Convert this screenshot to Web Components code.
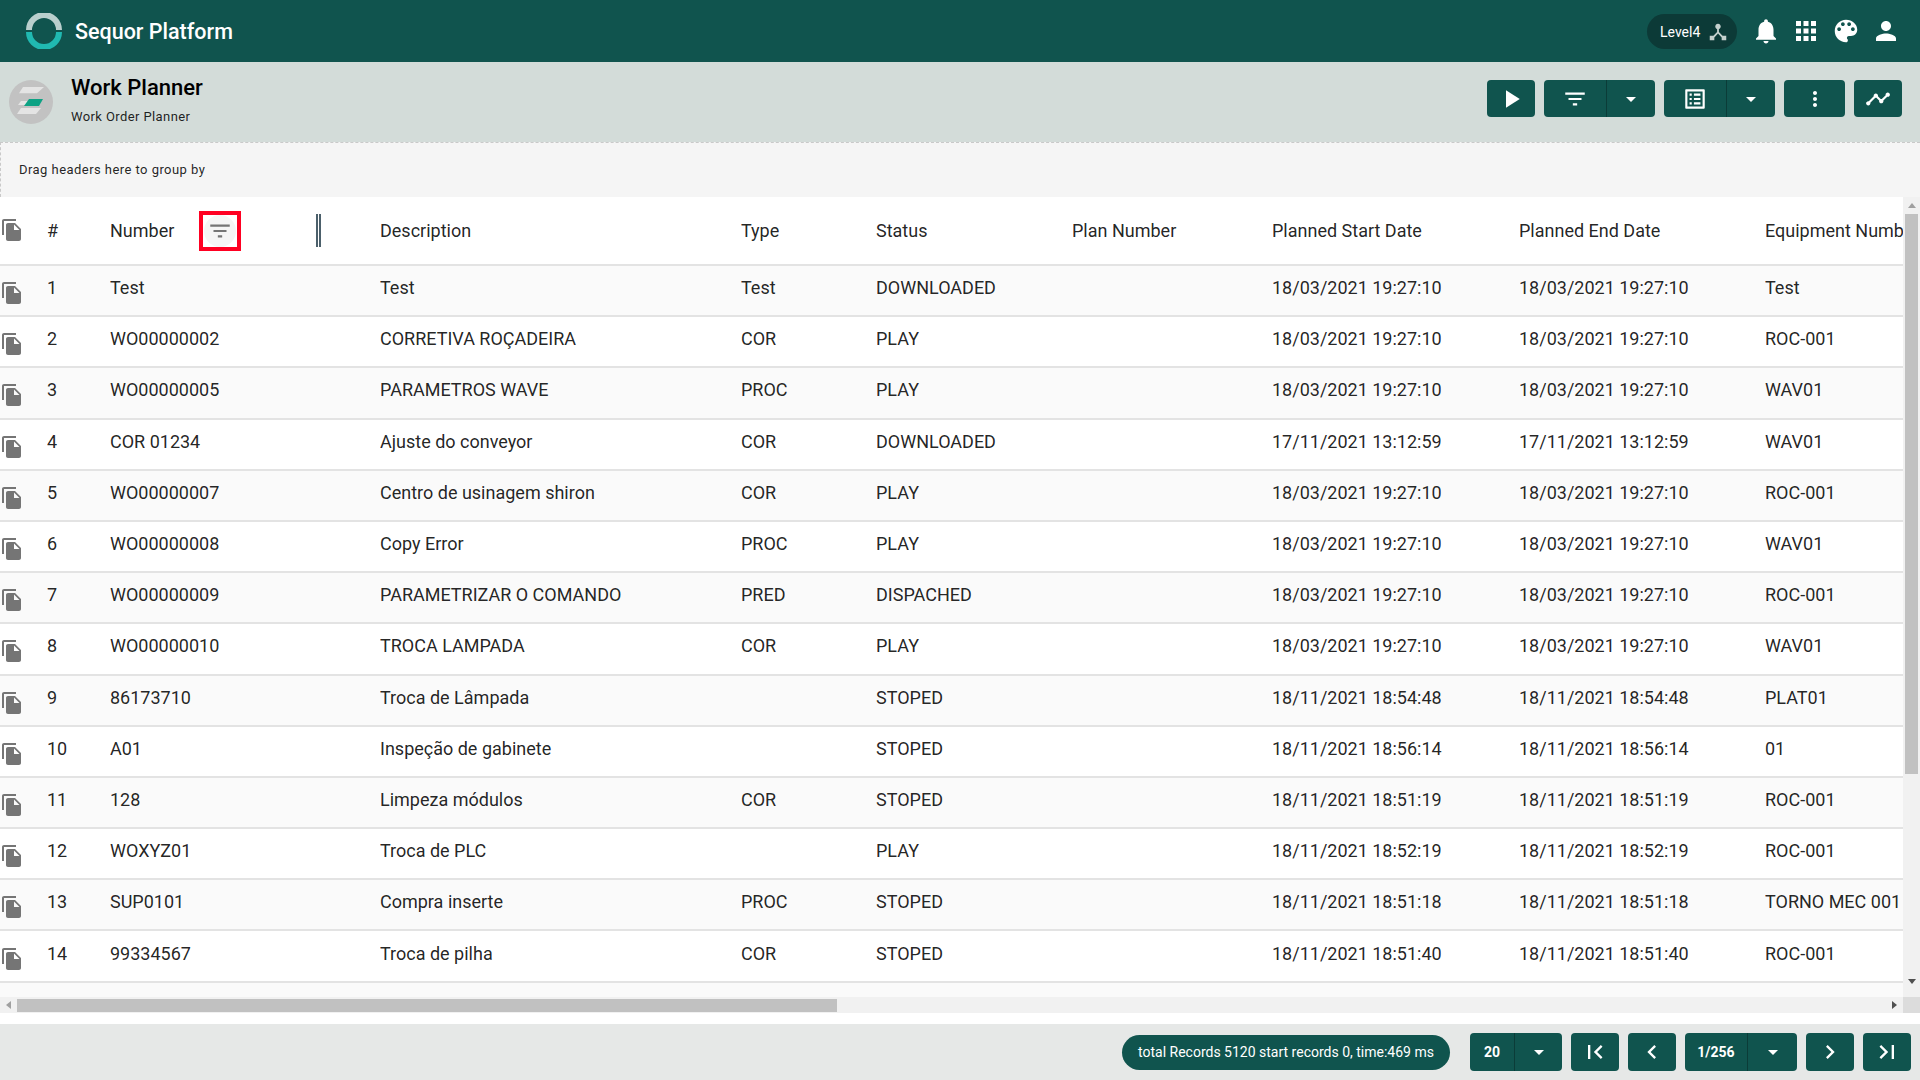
<!DOCTYPE html>
<html lang="en">
<head>
<meta charset="utf-8">
<title>Work Planner</title>
<style>
  html, body { margin: 0; height: 100%; background: #fff; overflow: hidden; }
  body { font-family: Roboto, "Liberation Sans", sans-serif; }
</style>
</head>
<body>
<work-planner-app></work-planner-app>
<script>
const ICONS = {
  bell: 'M12 22c1.1 0 2-.9 2-2h-4c0 1.1.89 2 2 2zm6-6v-5c0-3.07-1.64-5.64-4.5-6.32V4c0-.83-.67-1.5-1.5-1.5s-1.5.67-1.5 1.5v.68C7.63 5.36 6 7.92 6 11v5l-2 2v1h16v-1l-2-2z',
  apps: 'M4 8h4V4H4v4zm6 12h4v-4h-4v4zm-6 0h4v-4H4v4zm0-6h4v-4H4v4zm6 0h4v-4h-4v4zm6-10v4h4V4h-4zm-6 4h4V4h-4v4zm6 6h4v-4h-4v4zm0 6h4v-4h-4v4z',
  palette: 'M12 3c-4.97 0-9 4.03-9 9s4.03 9 9 9c.83 0 1.5-.67 1.5-1.5 0-.39-.15-.74-.39-1.01-.23-.26-.38-.61-.38-.99 0-.83.67-1.5 1.5-1.5H16c2.76 0 5-2.24 5-5 0-4.42-4.03-8-9-8zm-5.5 9c-.83 0-1.5-.67-1.5-1.5S5.67 9 6.5 9 8 9.67 8 10.5 7.33 12 6.5 12zm3-4C8.67 8 8 7.33 8 6.5S8.67 5 9.5 5s1.5.67 1.5 1.5S10.33 8 9.5 8zm5 0c-.83 0-1.5-.67-1.5-1.5S13.67 5 14.5 5s1.5.67 1.5 1.5S15.33 8 14.5 8zm3 4c-.83 0-1.5-.67-1.5-1.5S16.67 9 17.5 9s1.5.67 1.5 1.5-.67 1.5-1.5 1.5z',
  person: 'M12 12c2.21 0 4-1.79 4-4s-1.79-4-4-4-4 1.79-4 4 1.79 4 4 4zm0 2c-2.67 0-8 1.34-8 4v2h16v-2c0-2.66-5.33-4-8-4z',
  hub: 'M17 16l-4-4V8.82C14.16 8.4 15 7.3 15 6c0-1.66-1.34-3-3-3S9 4.34 9 6c0 1.3.84 2.4 2 2.82V12l-4 4H3v5h5v-3.05l4-4.2 4 4.2V21h5v-5h-4z',
  filter: 'M10 18h4v-2h-4v2zM3 6v2h18V6H3zm3 7h12v-2H6v2z',
  play: 'M8 5v14l11-7z',
  drop: 'M7 10l5 5 5-5z',
  list: 'M19 5v14H5V5h14m1.1-2H3.9c-.5 0-.9.4-.9.9v16.2c0 .4.4.9.9.9h16.2c.4 0 .9-.5.9-.9V3.9c0-.5-.5-.9-.9-.9zM11 7h6v2h-6V7zm0 4h6v2h-6v-2zm0 4h6v2h-6zM7 7h2v2H7zm0 4h2v2H7zm0 4h2v2H7z',
  more: 'M12 8c1.1 0 2-.9 2-2s-.9-2-2-2-2 .9-2 2 .9 2 2 2zm0 2c-1.1 0-2 .9-2 2s.9 2 2 2 2-.9 2-2-.9-2-2-2zm0 6c-1.1 0-2 .9-2 2s.9 2 2 2 2-.9 2-2-.9-2-2-2z',
  timeline: 'M23 8c0 1.1-.9 2-2 2-.18 0-.35-.02-.51-.07l-3.56 3.55c.05.16.07.34.07.52 0 1.1-.9 2-2 2s-2-.9-2-2c0-.18.02-.36.07-.52l-2.55-2.55c-.16.05-.34.07-.52.07s-.36-.02-.52-.07l-4.55 4.56c.05.16.07.33.07.51 0 1.1-.9 2-2 2s-2-.9-2-2 .9-2 2-2c.18 0 .35.02.51.07l4.56-4.55C8.02 9.36 8 9.18 8 9c0-1.1.9-2 2-2s2 .9 2 2c0 .18-.02.36-.07.52l2.55 2.55c.16-.05.34-.07.52-.07s.36.02.52.07l3.55-3.56C19.02 8.35 19 8.18 19 8c0-1.1.9-2 2-2s2 .9 2 2z',
  copy: 'M16 1H4c-1.1 0-2 .9-2 2v14h2V3h12V1zm-1 4l6 6v10c0 1.1-.9 2-2 2H7.99C6.89 23 6 22.1 6 21l.01-14c0-1.1.89-2 1.99-2h7zm-1 7h5.5L14 6.5V12z',
  first: 'M18.41 16.59L13.82 12l4.59-4.59L17 6l-6 6 6 6zM6 6h2v12H6z',
  prev: 'M15.41 7.41L14 6l-6 6 6 6 1.41-1.41L10.83 12z',
  next: 'M10 6L8.59 7.41 13.17 12l-4.58 4.59L10 18l6-6z',
  last: 'M5.59 7.41L10.18 12l-4.59 4.59L7 18l6-6-6-6zM16 6h2v12h-2z'
};

const svg = (name, size, fill) =>
  `<svg width="${size}" height="${size}" viewBox="0 0 24 24" fill="${fill || 'currentColor'}" style="display:block"><path d="${ICONS[name]}"/></svg>`;

// one green button, optionally split: width list is "main,drop"
class SqButton extends HTMLElement {
  connectedCallback() {
    const icon = this.getAttribute('icon');
    const size = this.getAttribute('size') || 24;
    const w = this.getAttribute('w') || 48;
    const drop = this.getAttribute('drop');
    this.attachShadow({ mode: 'open' });
    this.shadowRoot.innerHTML = `
      <style>
        :host { display: flex; height: var(--btn-h, 37px); background: #10544e; color: #fff; border-radius: 4px; overflow: hidden; font: 700 14px Roboto, sans-serif; }
        .part { display: flex; align-items: center; justify-content: center; height: 100%; }
        .drop { border-left: 1px solid #0b3c38; box-sizing: border-box; }
      </style>
      <div class="part" style="width:${w}px">${icon ? svg(icon, size) : '<slot></slot>'}</div>
      ${drop ? `<div class="part drop" style="width:${drop}px">${svg('drop', 24)}</div>` : ''}
    `;
  }
}
customElements.define('sq-button', SqButton);

class AppBar extends HTMLElement {
  connectedCallback() {
    this.attachShadow({ mode: 'open' });
    this.shadowRoot.innerHTML = `
      <style>
        :host { display: flex; align-items: center; height: 62px; background: #10544e; color: #fff; padding: 0 19px 0 26px; flex: none; }
        .logo { display: block; margin-right: 13px; }
        .name { font: 500 21.5px Roboto, sans-serif; flex: 1; }
        .level { display: flex; align-items: center; height: 35px; width: 90px; box-sizing: border-box; padding-left: 13px; background: #0c3a37; border-radius: 18px; font-size: 14px; margin-right: 14px; margin-top: 1px; }
        .level svg { margin-left: 7px; color: #c4d0cd; }
        .tools { display: flex; gap: 10px; }
      </style>
      <svg class="logo" width="36" height="36" viewBox="0 0 36 36" fill="none" stroke-width="6">
        <path d="M3 17a15 15 0 0 1 30 0" stroke="#b9cfcd"/>
        <path d="M3 19a15 15 0 0 0 30 0" stroke="#20b9b1"/>
      </svg>
      <div class="name">Sequor Platform</div>
      <div class="level">Level4${svg('hub', 22)}</div>
      <div class="tools">${svg('bell', 30)}${svg('apps', 30)}${svg('palette', 30)}${svg('person', 30)}</div>
    `;
  }
}
customElements.define('app-bar', AppBar);

class PageHead extends HTMLElement {
  connectedCallback() {
    this.attachShadow({ mode: 'open' });
    this.shadowRoot.innerHTML = `
      <style>
        :host { display: flex; align-items: center; height: 80px; background: #d3dcd9; padding: 0 18px 0 9px; flex: none; color: #000; }
        .badge { margin-right: 18px; display: block; }
        .titles { flex: 1; margin-top: -4px; }
        .title { font: 500 22px/26px Roboto, sans-serif; }
        .sub { font: 400 13px/16px Roboto, sans-serif; letter-spacing: .4px; margin-top: 8px; color: rgba(0,0,0,.87); }
        .actions { display: flex; gap: 9px; margin-top: -7px; }
      </style>
      <svg class="badge" width="44" height="44" viewBox="0 0 44 44">
        <circle cx="22" cy="22" r="22" fill="#c2c2c2"/>
        <path d="M14 11h21l-7 8H10z" fill="#e4e4e4" transform="translate(0 -1.500) scale(1 .78)"/>
        <path d="M9 17h8l-3 4H6z" fill="#e4e4e4" transform="translate(3 4)"/>
        <path d="M20 19h14l-4 7H15z" fill="#0da284" transform="translate(0 0)"/>
        <path d="M12 28h20l-5 6H8z" fill="#e4e4e4"/>
      </svg>
      <div class="titles">
        <div class="title">Work Planner</div>
        <div class="sub">Work Order Planner</div>
      </div>
      <div class="actions">
        <sq-button icon="play" size="30"></sq-button>
        <sq-button icon="filter" w="62" drop="49" size="26"></sq-button>
        <sq-button icon="list" w="62" drop="49" size="26"></sq-button>
        <sq-button icon="more" w="61"></sq-button>
        <sq-button icon="timeline" size="26"></sq-button>
      </div>
    `;
  }
}
customElements.define('page-head', PageHead);

class GroupBar extends HTMLElement {
  connectedCallback() {
    this.attachShadow({ mode: 'open' });
    this.shadowRoot.innerHTML = `
      <style>
        :host { display: flex; align-items: center; height: 55px; box-sizing: border-box; background: #f5f5f5; border: 1px dashed #c9c9c9; border-width: 1px 0 0 1px; padding: 0 0 2px 18px; font: 13px Roboto, sans-serif; letter-spacing: .45px; color: rgba(0,0,0,.87); flex: none; }
      </style>
      <slot></slot>
    `;
  }
}
customElements.define('group-bar', GroupBar);

const COLS = '47px 63px 270px 361px 135px 196px 200px 247px 246px 300px';
const HEADERS = ['Description', 'Type', 'Status', 'Plan Number', 'Planned Start Date', 'Planned End Date', 'Equipment Number'];
const RS = '18/03/2021 19:27:10';
const ROWS = [
  ['Test', 'Test', 'Test', 'DOWNLOADED', '', RS, RS, 'Test'],
  ['WO00000002', 'CORRETIVA ROÇADEIRA', 'COR', 'PLAY', '', RS, RS, 'ROC-001'],
  ['WO00000005', 'PARAMETROS WAVE', 'PROC', 'PLAY', '', RS, RS, 'WAV01'],
  ['COR 01234', 'Ajuste do conveyor', 'COR', 'DOWNLOADED', '', '17/11/2021 13:12:59', '17/11/2021 13:12:59', 'WAV01'],
  ['WO00000007', 'Centro de usinagem shiron', 'COR', 'PLAY', '', RS, RS, 'ROC-001'],
  ['WO00000008', 'Copy Error', 'PROC', 'PLAY', '', RS, RS, 'WAV01'],
  ['WO00000009', 'PARAMETRIZAR O COMANDO', 'PRED', 'DISPACHED', '', RS, RS, 'ROC-001'],
  ['WO00000010', 'TROCA LAMPADA', 'COR', 'PLAY', '', RS, RS, 'WAV01'],
  ['86173710', 'Troca de Lâmpada', '', 'STOPED', '', '18/11/2021 18:54:48', '18/11/2021 18:54:48', 'PLAT01'],
  ['A01', 'Inspeção de gabinete', '', 'STOPED', '', '18/11/2021 18:56:14', '18/11/2021 18:56:14', '01'],
  ['128', 'Limpeza módulos', 'COR', 'STOPED', '', '18/11/2021 18:51:19', '18/11/2021 18:51:19', 'ROC-001'],
  ['WOXYZ01', 'Troca de PLC', '', 'PLAY', '', '18/11/2021 18:52:19', '18/11/2021 18:52:19', 'ROC-001'],
  ['SUP0101', 'Compra inserte', 'PROC', 'STOPED', '', '18/11/2021 18:51:18', '18/11/2021 18:51:18', 'TORNO MEC 001'],
  ['99334567', 'Troca de pilha', 'COR', 'STOPED', '', '18/11/2021 18:51:40', '18/11/2021 18:51:40', 'ROC-001']
];

class DataGrid extends HTMLElement {
  connectedCallback() {
    const copy = `<span class="copy">${svg('copy', 24, '#757575')}</span>`;
    const body = ROWS.map((r, i) => `
      <div class="row" style="background:${i % 2 ? '#fff' : '#fafafa'}">
        <span class="cell first">${copy}</span>
        <span class="cell">${i + 1}</span>
        ${r.map(v => `<span class="cell">${v}</span>`).join('')}
      </div>`).join('');
    this.attachShadow({ mode: 'open' });
    this.shadowRoot.innerHTML = `
      <style>
        :host { display: grid; grid-template-columns: 1fr 17px; grid-template-rows: 800px 16px; flex: none; font: 18px Roboto, sans-serif; color: rgba(0,0,0,.87); }
        .view { overflow: hidden; background: #fafafa; }
        .row, .head { display: grid; grid-template-columns: ${COLS}; width: 2265px; box-sizing: border-box; border-bottom: 2px solid #e3e3e3; }
        .head { height: 69px; background: #fff; align-items: center; }
        .row { height: 51.200px; align-items: center; }
        .cell { white-space: nowrap; overflow: hidden; display: block; margin-top: -6px; }
        .first { overflow: visible; margin-top: 0; }
        .head .cell { margin-top: 0; }
        .head .first { margin-top: -1px; }
        .copy { display: block; margin-top: 5px; }
        .head .copy { margin-top: 0; }
        .num { display: flex; align-items: center; overflow: visible; }
        .flag { box-sizing: border-box; width: 42px; height: 40px; border: 4px solid #ff0022; margin-left: 25px; display: flex; align-items: center; justify-content: center; background: #fff; color: #757575; flex: none; }
        .flag div { width: 32px; height: 32px; border-radius: 50%; background: #f5f5f5; display: flex; align-items: center; justify-content: center; }
        .grip { box-sizing: border-box; width: 5px; height: 33px; margin-left: 75px; border-left: 2px solid #4c606b; border-right: 2px solid #4c606b; flex: none; }
        .vbar { background: #f1f1f1; position: relative; display: flex; flex-direction: column; align-items: center; }
        .vbar .thumb { width: 13px; height: 560px; background: #c1c1c1; margin-top: 0; }
        .vbar .up, .vbar .down { height: 17px; width: 17px; display: flex; align-items: center; justify-content: center; }
        .vbar .down { margin-top: auto; height: 22px; padding-bottom: 10px; box-sizing: border-box; }
        .up i { border: 4px solid transparent; border-top: 0; border-bottom: 5px solid #a0a0a0; }
        .down i { border: 4px solid transparent; border-bottom: 0; border-top: 5px solid #505050; }
        .hbar { background: #f1f1f1; display: flex; align-items: center; height: 16px; }
        .hbar .thumb { width: 820px; height: 13px; background: #c1c1c1; }
        .hbar .left, .hbar .right { width: 17px; height: 16px; display: flex; align-items: center; justify-content: center; flex: none; }
        .hbar .right { margin-left: auto; }
        .left i { border: 4px solid transparent; border-left: 0; border-right: 5px solid #a0a0a0; }
        .right i { border: 4px solid transparent; border-right: 0; border-left: 5px solid #505050; }
        .corner { background: #dcdcdc; }
      </style>
      <div class="view">
        <div class="head">
          <span class="cell first">${copy}</span>
          <span class="cell">#</span>
          <span class="cell num">Number<span class="flag"><div>${svg('filter', 26)}</div></span><span class="grip"></span></span>
          ${HEADERS.map(h => `<span class="cell">${h}</span>`).join('')}
        </div>
        ${body}
      </div>
      <div class="vbar"><div class="up"><i></i></div><div class="thumb"></div><div class="down"><i></i></div></div>
      <div class="hbar"><div class="left"><i></i></div><div class="thumb"></div><div class="right"><i></i></div></div>
      <div class="corner"></div>
    `;
  }
}
customElements.define('data-grid', DataGrid);

class PagerBar extends HTMLElement {
  connectedCallback() {
    this.attachShadow({ mode: 'open' });
    this.shadowRoot.innerHTML = `
      <style>
        :host { display: flex; align-items: center; justify-content: flex-end; height: 56px; background: #e6e8e7; padding: 0 9px 0 0; gap: 9px; flex: none; margin-top: 11px; --btn-h: 38px; }
        .pill { width: 328px; height: 35px; border-radius: 18px; background: #10544e; color: #fff; font: 14px/35px Roboto, sans-serif; text-align: center; margin-right: 11px; white-space: nowrap; }
      </style>
      <div class="pill">total Records 5120 start records 0, time:469 ms</div>
      <sq-button w="44" drop="48">20</sq-button>
      <sq-button icon="first" size="28"></sq-button>
      <sq-button icon="prev" size="28"></sq-button>
      <sq-button w="62" drop="50">1/256</sq-button>
      <sq-button icon="next" size="28"></sq-button>
      <sq-button icon="last" size="28"></sq-button>
    `;
  }
}
customElements.define('pager-bar', PagerBar);

class WorkPlannerApp extends HTMLElement {
  connectedCallback() {
    this.attachShadow({ mode: 'open' });
    this.shadowRoot.innerHTML = `
      <style>
        :host { display: flex; flex-direction: column; height: 100vh; overflow: hidden; }
      </style>
      <app-bar></app-bar>
      <page-head></page-head>
      <group-bar>Drag headers here to group by</group-bar>
      <data-grid></data-grid>
      <pager-bar></pager-bar>
    `;
  }
}
customElements.define('work-planner-app', WorkPlannerApp);
</script>
</body>
</html>
